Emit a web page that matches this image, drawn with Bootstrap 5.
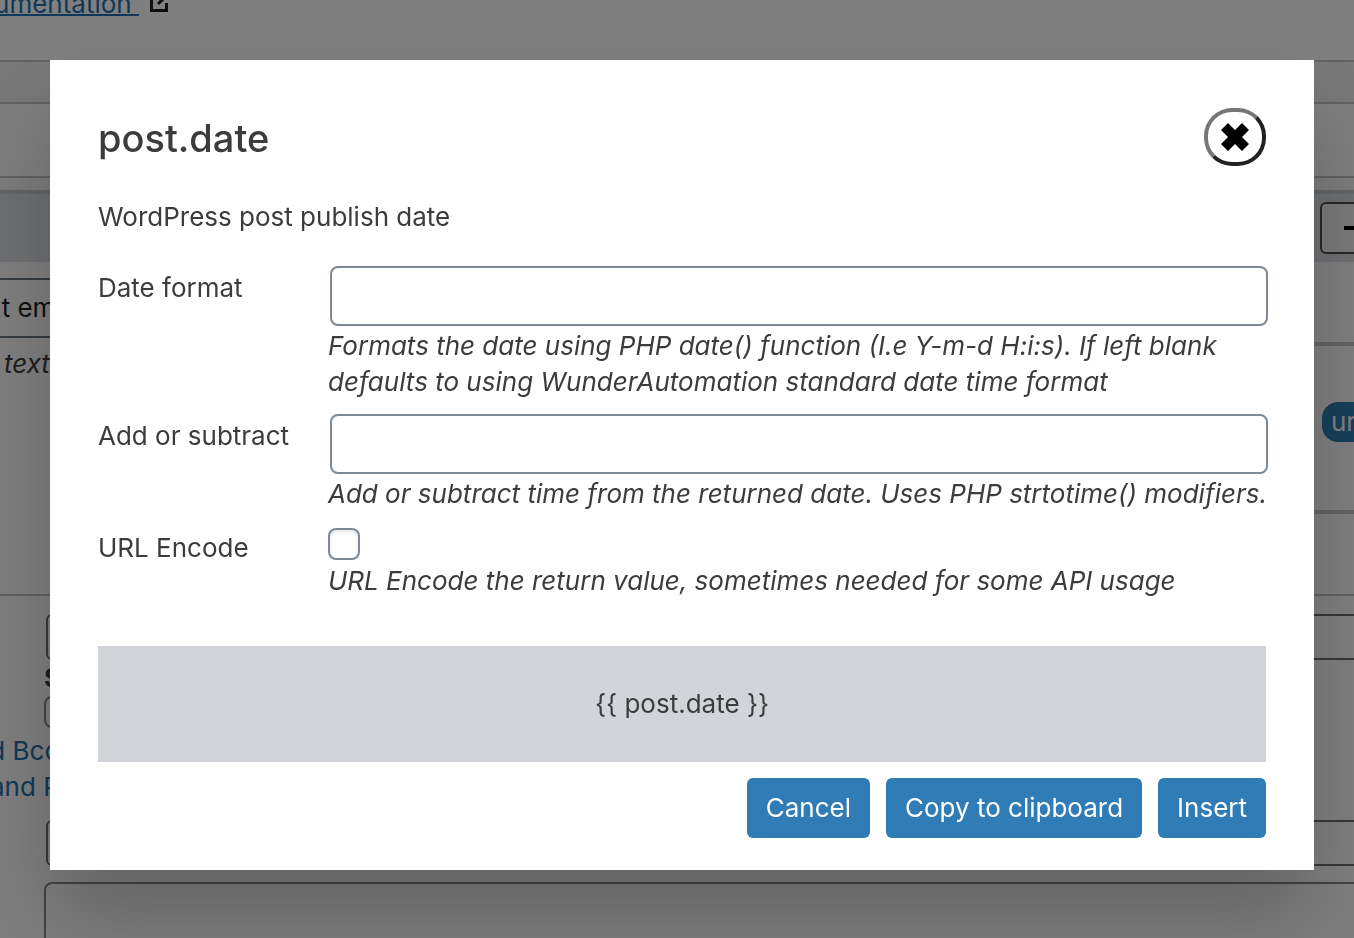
<!DOCTYPE html>
<html lang="en">
<head>
<meta charset="utf-8">
<meta name="viewport" content="width=device-width, initial-scale=1">
<title>post.date</title>
<link href="https://cdn.jsdelivr.net/npm/bootstrap@5.3.0/dist/css/bootstrap.min.css" rel="stylesheet">
<script src="https://cdn.jsdelivr.net/npm/bootstrap@5.3.0/dist/js/bootstrap.bundle.min.js"></script>
<style>
  body { font-family: Inter, "Liberation Sans", sans-serif; font-size: 26px; line-height: 36px; color: #3c3c3c; background: #fff; height: 100vh; overflow: hidden; }
  a { color: #2271b1; text-decoration-thickness: 2px; }
  /* editor page behind the dialog */
  .intro { height: 62px; border-bottom: 2px solid #c3c4c7; }
  .crumb { width: 139px; height: 22px; overflow: hidden; line-height: 36px; align-items: flex-end; }
  .strip { height: 42px; background: #f0f0f1; border-bottom: 2px solid #c3c4c7; }
  .titlebar { height: 74px; border-bottom: 2px solid #c3c4c7; }
  .spacer { height: 12px; background: #f8f8f8; }
  .panels { height: 406px; border-bottom: 2px solid #c3c4c7; }
  .panel-head { height: 72px; background: #dcdfe4; border-top: 4px solid #c6c9ce; padding-top: 8px; }
  .minus-btn { width: 60px; height: 52px; border: 2px solid #505050; border-radius: 6px; background: #f3f3f3; margin-right: -26px; padding: 0 0 0 22px; text-align: left; }
  .side { width: 50px; }
  .cell-a { height: 84px; border-bottom: 4px solid #c6c9ce; }
  .cell-b { height: 168px; border-bottom: 4px solid #c6c9ce; padding: 56px 0 0 18px; }
  .pill { height: 40px; width: 90px; background: #2f80b5; border-radius: 16px; color: #fff; padding: 2px 9px; }
  .kind { width: 400px; height: 60px; margin: 16px 0 0 -8px; border: 2px solid #6c7781; color: #1e1e1e; display: flex; align-items: center; }
  .cut { width: 76px; overflow: hidden; white-space: nowrap; }
  .lower { padding: 18px 0 0 44px; }
  .line-input { display: block; width: calc(100% + 20px); height: 46px; margin-left: 2px; border: 2px solid #707070; border-radius: 6px; background: #fff; }
  .box-check { appearance: none; display: block; width: 32px; height: 32px; border: 2px solid #7e8993; border-radius: 8px; margin: 0; }
  .long-text { display: block; width: calc(100% + 20px); height: 90px; border: 2px solid #7e8993; border-radius: 8px; resize: none; }
  .links { margin: 5px 0 15px -54px; }
  .links a { text-decoration: none; display: block; }
  .links a:first-child { margin-left: -16px; }
  /* dialog */
  .param-dialog { max-width: none; margin: 60px 40px 0 50px; }
  .param-box { border: 0; border-radius: 0; padding: 48px 48px 32px; background: #fff; color: #3c3c3c; box-shadow: 0 50px 80px rgba(0,0,0,.22); }
  .param-title { font-size: 38px; line-height: 60px; font-weight: 450; }
  .round-close { width: 62px; height: 58px; border: 4px solid; border-color: #767676 #212121 #212121 #767676; border-radius: 28px; background: #fff; }
  .summary { margin: 31px 0; }
  .param-form { display: grid; grid-template-columns: 230px 1fr; row-gap: 14px; margin: 0 -2px 47px 0; }
  .param-form > label { padding-top: 4px; }
  .param-input { display: block; height: 60px; width: calc(100% - 2px); margin-left: 2px; margin-bottom: 2px; border: 2px solid #7e8993; border-radius: 8px; padding: 0 16px; }
  .tick { appearance: none; display: block; width: 32px; height: 32px; border: 2px solid #7e8993; border-radius: 8px; margin: 2px 0 3px; background: #fff; box-shadow: inset 0 2px 4px rgba(0,0,0,.1); }
  .hint { font-style: italic; margin: 0; }
  .preview { height: 116px; background: #d1d5da; }
  .act { background: #2f7cb6; color: #fff; border: 0; border-radius: 6px; height: 60px; padding: 0 19px; font-size: 26px; line-height: 36px; }
  .act:hover { background: #2a6fa3; color: #fff; }
</style>
</head>
<body>
<main>
  <header class="intro d-flex">
    <div class="crumb d-flex justify-content-end"><a href="#">umentation&nbsp;</a></div>
    <svg class="ms-2" width="24" height="16" viewBox="0 0 24 16" fill="none" stroke="#1d1d1d" stroke-width="3"><path d="M8 -4H4.500V10.500H19.500V3M11 4L20 -5"/></svg>
  </header>
  <div class="strip"></div>
  <div class="titlebar"></div>
  <div class="spacer"></div>
  <section class="panels">
    <div class="panel-head d-flex justify-content-end"><button class="minus-btn" type="button" aria-label="Remove"><svg class="d-block" width="20" height="4"><path d="M0 2H20" stroke="#000" stroke-width="4"/></svg></button></div>
    <div class="d-flex justify-content-between">
      <div>
        <div class="kind"><div class="cut d-flex justify-content-end">xt ema</div></div>
        <em class="d-block mt-2 ps-1">text</em>
      </div>
      <div class="side">
        <div class="cell-a"></div>
        <div class="cell-b"><div class="pill">url</div></div>
      </div>
    </div>
  </section>
  <section class="lower">
    <input class="line-input" type="text" aria-label="Subject">
    <strong class="d-block">S</strong>
    <input class="box-check" type="checkbox" aria-label="Show Bcc">
    <div class="links"><a href="#">nd Bcc</a><a href="#">and P</a></div>
    <input class="line-input" type="text" aria-label="Recipient">
    <textarea class="long-text mt-3" aria-label="Content"></textarea>
  </section>
</main>

<div class="modal-backdrop show"></div>
<div class="modal show d-block" role="dialog" aria-labelledby="dlg-title">
  <div class="modal-dialog param-dialog">
    <div class="modal-content param-box">
      <div class="d-flex justify-content-between">
        <h1 class="param-title m-0" id="dlg-title">post.date</h1>
        <button class="round-close d-flex align-items-center justify-content-center p-0" type="button" aria-label="Close">
          <svg width="30" height="30" viewBox="0 0 30 30"><path d="M8 1L15 8L22 1L29 8L22 15L29 22L22 29L15 22L8 29L1 22L8 15L1 8Z"/></svg>
        </button>
      </div>
      <p class="summary">WordPress post publish date</p>
      <form class="param-form">
        <label for="fmt">Date format</label>
        <div>
          <input class="param-input" id="fmt" type="text">
          <p class="hint">Formats the date using PHP date() function (I.e Y-m-d H:i:s). If left blank defaults to using WunderAutomation standard date time format</p>
        </div>
        <label for="add">Add or subtract</label>
        <div>
          <input class="param-input" id="add" type="text">
          <p class="hint">Add or subtract time from the returned date. Uses PHP strtotime() modifiers.</p>
        </div>
        <label for="enc">URL Encode</label>
        <div>
          <input class="tick" id="enc" type="checkbox">
          <p class="hint">URL Encode the return value, sometimes needed for some API usage</p>
        </div>
      </form>
      <div class="preview d-flex align-items-center justify-content-center">{{ post.date }}</div>
      <div class="d-flex justify-content-end gap-3 mt-3">
        <button class="btn act" type="button">Cancel</button>
        <button class="btn act" type="button">Copy to clipboard</button>
        <button class="btn act" type="button">Insert</button>
      </div>
    </div>
  </div>
</div>
</body>
</html>
